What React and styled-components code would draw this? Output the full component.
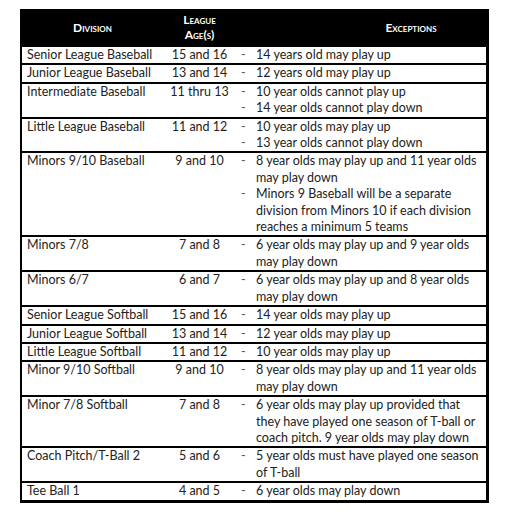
import React from "react";
import styled, { createGlobalStyle } from "styled-components";

const Global = createGlobalStyle`
  html, body { margin: 0; padding: 0; background: #fff; }
  body { font-family: Lato, "Open Sans", sans-serif; color: #222; }
`;

const Page = styled.div`
  padding: 9px 0 0 20px;
`;

const Table = styled.div`
  width: 469px;
  box-sizing: border-box;
  border: 2px solid #000;
  border-right-width: 3px;
  border-bottom-width: 3px;
  border-top-width: 0;
`;

const HeaderRow = styled.div`
  display: grid;
  grid-template-columns: 141px 73px 1fr;
  align-items: center;
  height: 36px;
  background: #000;
  color: #fff;
  font-weight: 700;
  font-variant: small-caps;
  font-size: 12px;
  line-height: 15px;
`;

const HeaderCell = styled.div`
  text-align: center;
  padding-left: ${(p) => p.$shift || 0}px;
`;

const Row = styled.div`
  display: grid;
  grid-template-columns: 141px 73px 1fr;
  border-top: 2px solid #000;
  font-size: 12.5px;
  line-height: 16.4px;
  padding-bottom: 0;
`;

const Division = styled.div`
  padding-left: 5px;
  white-space: nowrap;
`;

const Age = styled.div`
  text-align: center;
  white-space: nowrap;
`;

const List = styled.div`
  display: flex;
  flex-direction: column;
  padding-left: 5px;
`;

const Item = styled.div`
  display: grid;
  grid-template-columns: 15px 1fr;
`;

const Dash = styled.span`
  color: #555;
`;

const Line = styled.div`
  white-space: nowrap;
`;

const rows = [
  ["Senior League Baseball", "15 and 16", [["14 years old may play up"]]],
  ["Junior League Baseball", "13 and 14", [["12 years old may play up"]]],
  ["Intermediate Baseball", "11 thru 13", [["10 year olds cannot play up"], ["14 year olds cannot play down"]]],
  ["Little League Baseball", "11 and 12", [["10 year olds may play up"], ["13 year olds cannot play down"]]],
  [
    "Minors 9/10 Baseball",
    "9 and 10",
    [
      ["8 year olds may play up and 11 year olds", "may play down"],
      ["Minors 9 Baseball will be a separate", "division from Minors 10 if each division", "reaches a minimum 5 teams"],
    ],
  ],
  ["Minors 7/8", "7 and 8", [["6 year olds may play up and 9 year olds", "may play down"]]],
  ["Minors 6/7", "6 and 7", [["6 year olds may play up and 8 year olds", "may play down"]]],
  ["Senior League Softball", "15 and 16", [["14 year olds may play up"]]],
  ["Junior League Softball", "13 and 14", [["12 year olds may play up"]]],
  ["Little League Softball", "11 and 12", [["10 year olds may play up"]]],
  ["Minor 9/10 Softball", "9 and 10", [["8 year olds may play up and 11 year olds", "may play down"]]],
  [
    "Minor 7/8 Softball",
    "7 and 8",
    [["6 year olds may play up provided that", "they have played one season of T-ball or", "coach pitch. 9 year olds may play down"]],
  ],
  ["Coach Pitch/T-Ball 2", "5 and 6", [["5 year olds must have played one season", "of T-ball"]]],
  ["Tee Ball 1", "4 and 5", [["6 year olds may play down"]]],
];

export default function App() {
  return (
    <>
      <Global />
      <Page>
        <Table>
          <HeaderRow>
            <HeaderCell>Division</HeaderCell>
            <HeaderCell>
              League
              <br />
              Age(s)
            </HeaderCell>
            <HeaderCell $shift={100}>Exceptions</HeaderCell>
          </HeaderRow>
          {rows.map(([div, age, items]) => (
            <Row key={div}>
              <Division>{div}</Division>
              <Age>{age}</Age>
              <List>
                {items.map((lines, i) => (
                  <Item key={i}>
                    <Dash>-</Dash>
                    <div>
                      {lines.map((l) => (
                        <Line key={l}>{l}</Line>
                      ))}
                    </div>
                  </Item>
                ))}
              </List>
            </Row>
          ))}
        </Table>
      </Page>
    </>
  );
}
